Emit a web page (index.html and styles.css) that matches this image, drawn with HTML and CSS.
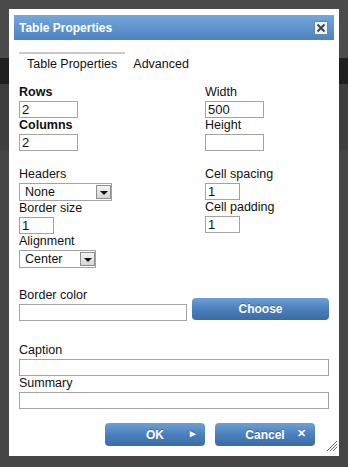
FILE: index.html
```html
<!DOCTYPE html>
<html lang="en">
<head>
    <meta charset="UTF-8">
    <meta name="viewport" content="width=device-width, initial-scale=1.0">
    <title>Table Properties</title>
    <link rel="stylesheet" href="styles.css">
</head>
<body>
    <div class="dialog">
        <!-- Title bar -->
        <div class="titlebar">
            <span class="title">Table Properties</span>
            <button class="close" type="button">
                <svg width="14" height="14" viewBox="0 0 14 14">
                    <rect x="0.5" y="0.5" width="13" height="13" fill="#eef2f7" stroke="#6f86a3"/>
                    <path d="M3.5 3.5 L10.5 10.5 M10.5 3.5 L3.5 10.5" stroke="#3a4656" stroke-width="2"/>
                </svg>
            </button>
        </div>

        <!-- Tabs -->
        <div class="tabs">
            <span class="tab active">Table Properties</span>
            <span class="tab">Advanced</span>
        </div>

        <div class="panel">
            <div class="section first">
                <div class="col left">
                    <div class="field">
                        <label class="strong">Rows</label>
                        <input type="text" class="input w59" value="2">
                    </div>
                    <div class="field">
                        <label class="strong">Columns</label>
                        <input type="text" class="input w59" value="2">
                    </div>
                </div>
                <div class="col">
                    <div class="field">
                        <label>Width</label>
                        <input type="text" class="input w59" value="500">
                    </div>
                    <div class="field">
                        <label>Height</label>
                        <input type="text" class="input w59" value="">
                    </div>
                </div>
            </div>

            <div class="section second">
                <div class="col left">
                    <div class="field">
                        <label>Headers</label>
                        <div class="select w93">
                            <select><option>None</option></select>
                            <span class="arrow"></span>
                        </div>
                    </div>
                    <div class="field">
                        <label>Border size</label>
                        <input type="text" class="input w35" value="1">
                    </div>
                    <div class="field">
                        <label>Alignment</label>
                        <div class="select w77">
                            <select><option>Center</option></select>
                            <span class="arrow"></span>
                        </div>
                    </div>
                </div>
                <div class="col">
                    <div class="field">
                        <label>Cell spacing</label>
                        <input type="text" class="input w35" value="1">
                    </div>
                    <div class="field">
                        <label>Cell padding</label>
                        <input type="text" class="input w35" value="1">
                    </div>
                </div>
            </div>

            <div class="color-row">
                <div class="field">
                    <label>Border color</label>
                    <input type="text" class="input w168" value="">
                </div>
                <button class="btn choose" type="button">Choose</button>
            </div>

            <div class="bottom-fields">
                <div class="field">
                    <label>Caption</label>
                    <input type="text" class="input wide" value="">
                </div>
                <div class="field">
                    <label>Summary</label>
                    <input type="text" class="input wide" value="">
                </div>
            </div>
        </div>

        <div class="actions">
            <button class="btn action" type="button">OK<span class="icon">&#9656;</span></button>
            <button class="btn action" type="button">Cancel<span class="icon">&#10005;</span></button>
        </div>

        <span class="grip">
            <svg width="12" height="14" viewBox="0 0 12 14">
                <path d="M1 13 L11 3 M4 13 L11 6 M7 13 L11 9" stroke="#666" stroke-width="1"/>
            </svg>
        </span>
    </div>
</body>
</html>
```

FILE: styles.css
```css
* {
    margin: 0;
    padding: 0;
    box-sizing: border-box;
}

body {
    font-family: "Liberation Sans", Arial, sans-serif;
    font-size: 12.5px;
    color: #111;
    padding: 9px;
    min-height: 100vh;
    background: linear-gradient(to bottom, #4b4b4b 0, #4b4b4b 58px, #1f1f1f 58px, #1f1f1f 84px, #3e3e3e 84px, #3e3e3e 150px, #464646 150px);
}

.dialog {
    position: relative;
    width: 330px;
    height: 447px;
    background: #fff;
    padding-top: 6px;
}

.titlebar {
    margin: 0 5px;
    height: 25px;
    display: flex;
    align-items: center;
    justify-content: space-between;
    padding: 0 6px 0 5px;
    background: linear-gradient(to bottom, #74a7da, #4c82c1);
}

.title {
    color: #fff;
    font-weight: bold;
    font-size: 12px;
}

.close {
    border: none;
    background: none;
    display: flex;
    cursor: pointer;
}

.tabs {
    display: flex;
    margin: 12px 0 0 10px;
}

.tab {
    padding: 2px 8px 0;
    line-height: 16px;
    border-top: 2px solid transparent;
}

.tab.active {
    border-top-color: #c9c9c9;
}

.panel {
    padding: 0 10px;
}

.section {
    display: flex;
}

.section.first {
    margin-top: 13px;
}

.section.second {
    margin-top: 16px;
}

.col {
    display: flex;
    flex-direction: column;
}

.col.left {
    width: 186px;
}

.field {
    display: flex;
    flex-direction: column;
    align-items: flex-start;
}

.field label {
    line-height: 15px;
    margin-bottom: 1px;
}

.field label.strong {
    font-weight: bold;
}

.input {
    height: 17px;
    border: 1px solid #a3a3a3;
    padding: 0 2px;
    font-family: inherit;
    font-size: 13px;
    color: #111;
    background: #fff;
}

.input:focus {
    outline: none;
}

.w59 { width: 59px; }
.w35 { width: 35px; }
.w168 { width: 168px; }
.wide { width: 310px; }

.select {
    position: relative;
    height: 18px;
}

.w93 { width: 93px; }
.w77 { width: 77px; }

.select select {
    appearance: none;
    -webkit-appearance: none;
    width: 100%;
    height: 100%;
    border: 1px solid #a3a3a3;
    background: #fff;
    font-family: inherit;
    font-size: 12.5px;
    color: #111;
    padding-left: 5px;
}

.select .arrow {
    position: absolute;
    right: 1px;
    top: 2px;
    width: 15px;
    height: 14px;
    border: 1px solid #8e8e8e;
    background: linear-gradient(to bottom, #f4f4f4, #d4d4d4);
}

.select .arrow::after {
    content: "";
    position: absolute;
    left: 3px;
    top: 5px;
    border-left: 4px solid transparent;
    border-right: 4px solid transparent;
    border-top: 4px solid #111;
}

.color-row {
    display: flex;
    align-items: flex-end;
    margin-top: 20px;
}

.btn {
    border: none;
    border-radius: 4px;
    color: #fff;
    font-family: inherit;
    font-weight: bold;
    font-size: 12px;
    cursor: pointer;
    background: linear-gradient(to bottom, #6d9fd5, #4b80bd 50%, #3a6ba6);
    text-shadow: 0 -1px 0 rgba(0, 0, 0, 0.25);
}

.choose {
    width: 137px;
    height: 22px;
    margin-left: 5px;
    margin-bottom: 1px;
}

.bottom-fields {
    margin-top: 22px;
}

.actions {
    display: flex;
    justify-content: flex-end;
    gap: 10px;
    margin-top: 14px;
    padding-right: 24px;
}

.action {
    position: relative;
    width: 100px;
    height: 23px;
}

.action .icon {
    position: absolute;
    right: 9px;
    top: 4px;
    font-size: 11px;
    font-weight: bold;
}

.grip {
    position: absolute;
    right: 1px;
    bottom: 4px;
    display: flex;
}
```
